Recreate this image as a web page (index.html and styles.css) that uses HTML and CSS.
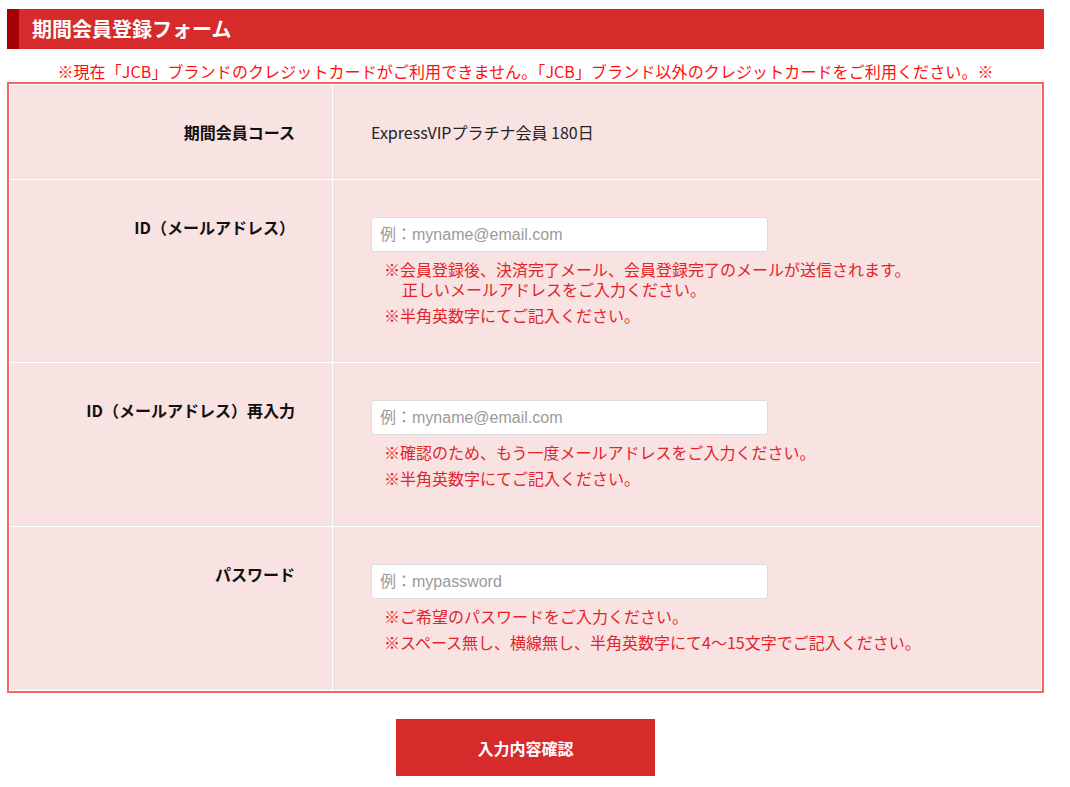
FILE: index.html
```html
<!DOCTYPE html>
<html lang="ja">
<head>
<meta charset="utf-8">
<title>期間会員登録フォーム</title>
<link rel="stylesheet" href="styles.css">
</head>
<body>
<div class="page">
  <h2 class="form-title">期間会員登録フォーム</h2>
  <p class="notice">※現在「JCB」ブランドのクレジットカードがご利用できません。「JCB」ブランド以外のクレジットカードをご利用ください。※</p>
  <div class="form-grid">
    <div class="label short">期間会員コース</div>
    <div class="value short">ExpressVIPプラチナ会員 180日</div>

    <div class="label">ID（メールアドレス）</div>
    <div class="value">
      <input class="text-input" type="text" placeholder="例：myname@email.com">
      <p class="note first">※会員登録後、決済完了メール、会員登録完了のメールが送信されます。<br>正しいメールアドレスをご入力ください。</p>
      <p class="note">※半角英数字にてご記入ください。</p>
    </div>

    <div class="label">ID（メールアドレス）再入力</div>
    <div class="value tall">
      <input class="text-input" type="text" placeholder="例：myname@email.com">
      <p class="note first">※確認のため、もう一度メールアドレスをご入力ください。</p>
      <p class="note">※半角英数字にてご記入ください。</p>
    </div>

    <div class="label">パスワード</div>
    <div class="value tall">
      <input class="text-input" type="password" placeholder="例：mypassword">
      <p class="note first">※ご希望のパスワードをご入力ください。</p>
      <p class="note">※スペース無し、横線無し、半角英数字にて4～15文字でご記入ください。</p>
    </div>
  </div>
  <div class="actions">
    <button class="submit" type="button">入力内容確認</button>
  </div>
</div>
</body>
</html>
```

FILE: styles.css
```css
* { box-sizing: border-box; }
body {
  margin: 0;
  background: #fff;
  font-family: "Noto Sans CJK JP", "Noto Sans", sans-serif;
  color: #222;
}
.page {
  width: 1037px;
  margin-left: 7px;
  padding-top: 9px;
}
.form-title {
  margin: 0;
  height: 40px;
  line-height: 40px;
  background: #d72a2b;
  border-left: 12px solid #a50006;
  color: #fff;
  font-size: 20px;
  font-weight: bold;
  padding-left: 13px;
}
.notice {
  margin: 11px 0 0;
  line-height: 22px;
  font-size: 16px;
  color: #ff1010;
  text-align: center;
  letter-spacing: 0.1px;
}
.form-grid {
  display: grid;
  grid-template-columns: 322px 1fr;
  gap: 1px;
  padding: 1px;
  background: #fff;
  border: 2px solid #f76466;
}
.label, .value {
  background: #f8e2e2;
  padding: 37px 38px 37px;
  font-size: 16px;
  line-height: 21px;
}
.label.short, .value.short { line-height: 20px; }
.value.tall { padding-bottom: 38px; }
.label {
  text-align: right;
  font-weight: bold;
  color: #111;
  padding-right: 37px;
}
.value { color: #222; }
.text-input {
  display: block;
  width: 397px;
  height: 35px;
  border: 1px solid #ddd;
  border-radius: 3px;
  background: #fff;
  padding: 0 8px;
  font-family: "Liberation Sans", "Noto Sans CJK JP", sans-serif;
  font-size: 16px;
  color: #333;
}
.text-input::placeholder { color: #9a9a9a; }
.note {
  margin: 6px 0 0 13px;
  padding-left: 18px;
  text-indent: -18px;
  font-size: 16px;
  line-height: 20px;
  color: #e3242b;
}
.note.first { margin-top: 7px; }
.actions {
  display: flex;
  justify-content: center;
  margin-top: 26px;
}
.submit {
  width: 259px;
  height: 57px;
  border: none;
  background: #d72a2b;
  color: #fff;
  font-family: "Noto Sans CJK JP", sans-serif;
  font-size: 16px;
  font-weight: bold;
  cursor: pointer;
}
```
